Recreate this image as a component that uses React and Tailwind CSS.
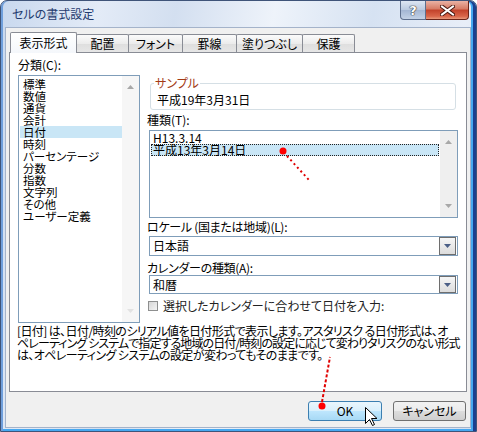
import React from "react";

const categories = [
  "標準",
  "数値",
  "通貨",
  "会計",
  "日付",
  "時刻",
  "パーセンテージ",
  "分数",
  "指数",
  "文字列",
  "その他",
  "ユーザー定義",
];

const tabs = [
  { label: "表示形式", w: "w-[67px]", active: true },
  { label: "配置", w: "w-[53px]" },
  { label: "フォント", w: "w-[55px]" },
  { label: "罫線", w: "w-[55px]" },
  { label: "塗りつぶし", w: "w-[67px]" },
  { label: "保護", w: "w-[53px]" },
];

function Arrow({ down, color = "#a8a8a8" }) {
  return (
    <svg width="7" height="4" viewBox="0 0 7 4">
      {down ? (
        <path d="M0 0h7L3.5 4z" fill={color} />
      ) : (
        <path d="M0 4h7L3.5 0z" fill={color} />
      )}
    </svg>
  );
}

function Combo({ value, h = "h-[20px]" }) {
  return (
    <div
      className={`ml-[2px] w-[309px] ${h} border border-[#7f9db9] bg-white flex items-center`}
    >
      <span className="pl-[3px] text-[12px] leading-[14px]">{value}</span>
      <div className="ml-auto mr-[1px] w-[17px] h-full border border-[#6e6e6e] bg-[linear-gradient(#f6f6f6,#dcdcdc)] flex items-center justify-center">
        <Arrow down color="#4b5f86" />
      </div>
    </div>
  );
}

export default function App() {
  return (
    <div className="relative w-[477px] h-[432px] bg-white overflow-hidden font-['Noto_Sans_CJK_JP','Noto_Sans',sans-serif] [font-feature-settings:'palt'] text-black text-[12px]">
      <div className="w-[477px] h-[432px] rounded-t-[7px] border border-[#3f5479] bg-[linear-gradient(100deg,#c8d8ee_0%,#e3ebf7_18%,#d3dff0_32%,#eef3fa_50%,#d6e2f2_68%,#e8eef8_85%,#d2deef_100%)] shadow-[inset_-3px_0_0_#1b3f8f,inset_-5px_0_0_#46a8f0,inset_2px_0_0_#6f9fdc,inset_0_-2px_0_#46a8f0] flex flex-col pl-[4px] pr-[5px] pb-[3px]">
        {/* title bar */}
        <div className="h-[26px] flex items-start shrink-0">
          <span className="pl-[7px] pt-[6px] leading-[14px] text-[#1f3a6e]">
            セルの書式設定
          </span>
          <div className="ml-auto mr-[2px] flex">
            <div className="w-[26px] h-[19px] rounded-bl-[4px] border border-[#5d6f8d] border-t-0 bg-[linear-gradient(#dde6f2,#b9c9df_50%,#a3b6d3_51%,#c3d2e6)] flex items-center justify-center">
              <span className="font-['DejaVu_Sans',sans-serif] font-bold text-[13px] leading-[13px] text-white [text-shadow:0_0_1px_#333,0_0_1px_#333,0_0_1px_#333]">
                ?
              </span>
            </div>
            <div className="w-[43px] h-[19px] rounded-br-[4px] border border-[#6b2418] border-t-0 border-l-0 bg-[linear-gradient(#eab2a4,#d67a64_45%,#c2412a_50%,#d9664a_85%,#e89a7d)] flex items-center justify-center">
              <svg width="15" height="11" viewBox="0 0 15 11">
                <path
                  d="M2 1.5L13 9.5M13 1.5L2 9.5"
                  stroke="#4a1810"
                  strokeWidth="4"
                  strokeLinecap="square"
                />
                <path
                  d="M2 1.5L13 9.5M13 1.5L2 9.5"
                  stroke="#ffffff"
                  strokeWidth="2"
                  strokeLinecap="square"
                />
              </svg>
            </div>
          </div>
        </div>

        {/* client area */}
        <div className="flex-1 bg-[#f0f0f0] border border-[#a4b3ca] flex flex-col">
          {/* tabs */}
          <div className="mt-[4px] ml-[4px] h-[20px] flex items-end shrink-0">
            {tabs.map((t) =>
              t.active ? (
                <div
                  key={t.label}
                  className={`${t.w} h-[21px] -mb-[1px] relative z-10 border border-b-0 border-[#898c95] rounded-t-[2px] bg-[linear-gradient(#ffffff,#f4f7fb)] flex items-center justify-center leading-[14px]`}
                >
                  {t.label}
                </div>
              ) : (
                <div
                  key={t.label}
                  className={`${t.w} h-[18px] -ml-[1px] border border-b-0 border-[#898c95] rounded-t-[2px] bg-[linear-gradient(#fbfbfb,#ececec_50%,#dedede_51%,#e6e6e6)] flex items-center justify-center leading-[14px]`}
                >
                  {t.label}
                </div>
              )
            )}
          </div>

          {/* panel */}
          <div className="ml-[3px] w-[458px] h-[340px] border border-[#898c95] bg-white flex flex-col overflow-hidden">
            <div className="flex">
              {/* left column */}
              <div className="pl-[8px] pt-[5px]">
                <div className="leading-[14px]">分類(C):</div>
                <div className="mt-[3px] w-[122px] h-[248px] border border-[#7f9db9] bg-white flex">
                  <div className="flex-1 pt-[2px] pl-[1px]">
                    {categories.map((c) => (
                      <div
                        key={c}
                        className={`h-[12px] leading-[12px] text-[11.5px] pl-[3px] whitespace-nowrap ${
                          c === "日付" ? "bg-[#c9e6f6]" : ""
                        }`}
                      >
                        {c}
                      </div>
                    ))}
                  </div>
                  <div className="w-[17px] bg-[#f6f6f6] flex flex-col items-center justify-between py-[9px]">
                    <Arrow />
                    <Arrow down color="#e2e2e2" />
                  </div>
                </div>
              </div>

              {/* right column */}
              <div className="ml-[7px] w-[311px] pt-[23px]">
                <fieldset className="ml-[3px] w-[306px] border border-[#d5dfe5] rounded-[3px] px-[6px] pb-[2px]">
                  <legend className="-ml-[3px] px-[1px] leading-[14px] text-[#a33a15]">
                    サンプル
                  </legend>
                  <div className="pt-[3px] leading-[14px]">平成19年3月31日</div>
                </fieldset>

                <div className="mt-[3px] leading-[14px]">種類(T):</div>
                <div className="mt-[3px] ml-[2px] w-[309px] h-[88px] border border-[#7f9db9] bg-white flex">
                  <div className="flex-1 pt-[1px] px-[1px]">
                    <div className="h-[12px] leading-[12px] pl-[2px]">H13.3.14</div>
                    <div className="h-[12px] leading-[10px] pl-[1px] bg-[#c9e6f6] border border-dotted border-[#222]">
                      平成13年3月14日
                    </div>
                  </div>
                  <div className="w-[17px] bg-[#efefef] flex flex-col items-center justify-between py-[9px]">
                    <Arrow />
                    <Arrow down />
                  </div>
                </div>

                <div className="mt-[2px] leading-[14px] tracking-[-0.3px]">
                  ロケール (国または地域)(L):
                </div>
                <div className="mt-[2px]">
                  <Combo value="日本語" />
                </div>

                <div className="mt-[5px] leading-[14px] tracking-[-0.3px]">
                  カレンダーの種類(A):
                </div>
                <Combo value="和暦" h="h-[19px]" />

                <div className="mt-[5px] h-[14px] flex items-center">
                  <div className="ml-[1px] w-[10px] h-[10px] border border-[#8e8f8f] bg-[linear-gradient(135deg,#d6d6d6,#f4f4f4)]" />
                  <span className="ml-[5px] leading-[14px] text-[#222]">
                    選択したカレンダーに合わせて日付を入力:
                  </span>
                </div>
              </div>
            </div>

            {/* description */}
            <div className="mt-[2px] pl-[7px] leading-[12px] whitespace-nowrap tracking-[-0.6px]">
              <div>
                [日付] は、日付/時刻のシリアル値を日付形式で表示します。アスタリスク
                る日付形式は、オ
              </div>
              <div className="tracking-[-0.9px]">
                ペレーティング システムで指定する地域の日付/時刻の設定に応じて変わりタリスクのない形式
              </div>
              <div>は、オペレーティング システムの設定が変わってもそのままです。</div>
            </div>
          </div>

          {/* buttons */}
          <div className="mt-[9px] flex justify-end gap-[11px] pr-[4px]">
            <button className="w-[74px] h-[20px] rounded-[3px] border border-[#3c7fb1] bg-[linear-gradient(#eaf6fd,#d9f0fc_50%,#bee6fd_51%,#a7d9f5)] leading-[14px]">
              OK
            </button>
            <button className="w-[73px] h-[20px] rounded-[3px] border border-[#707070] bg-[linear-gradient(#f2f2f2,#ebebeb_50%,#dddddd_51%,#cfcfcf)] leading-[14px]">
              キャンセル
            </button>
          </div>
        </div>
      </div>

      {/* annotations */}
      <svg
        className="absolute inset-0 pointer-events-none"
        width="477"
        height="432"
        viewBox="0 0 477 432"
      >
        <circle cx="283" cy="151" r="3.5" fill="#ff0000" />
        <path
          d="M287 156L309 180"
          stroke="#e00000"
          strokeWidth="2"
          strokeDasharray="2 3"
        />
        <circle cx="322" cy="406" r="3.5" fill="#ff0000" />
        <path
          d="M322 402L330 357"
          stroke="#e00000"
          strokeWidth="2"
          strokeDasharray="3 2"
        />
        <path
          d="M365.5 407.5v16l4-4l3 6l2-1l-3-6h5.5z"
          fill="#ffffff"
          stroke="#000000"
          strokeWidth="1"
          strokeLinejoin="round"
        />
      </svg>
    </div>
  );
}
